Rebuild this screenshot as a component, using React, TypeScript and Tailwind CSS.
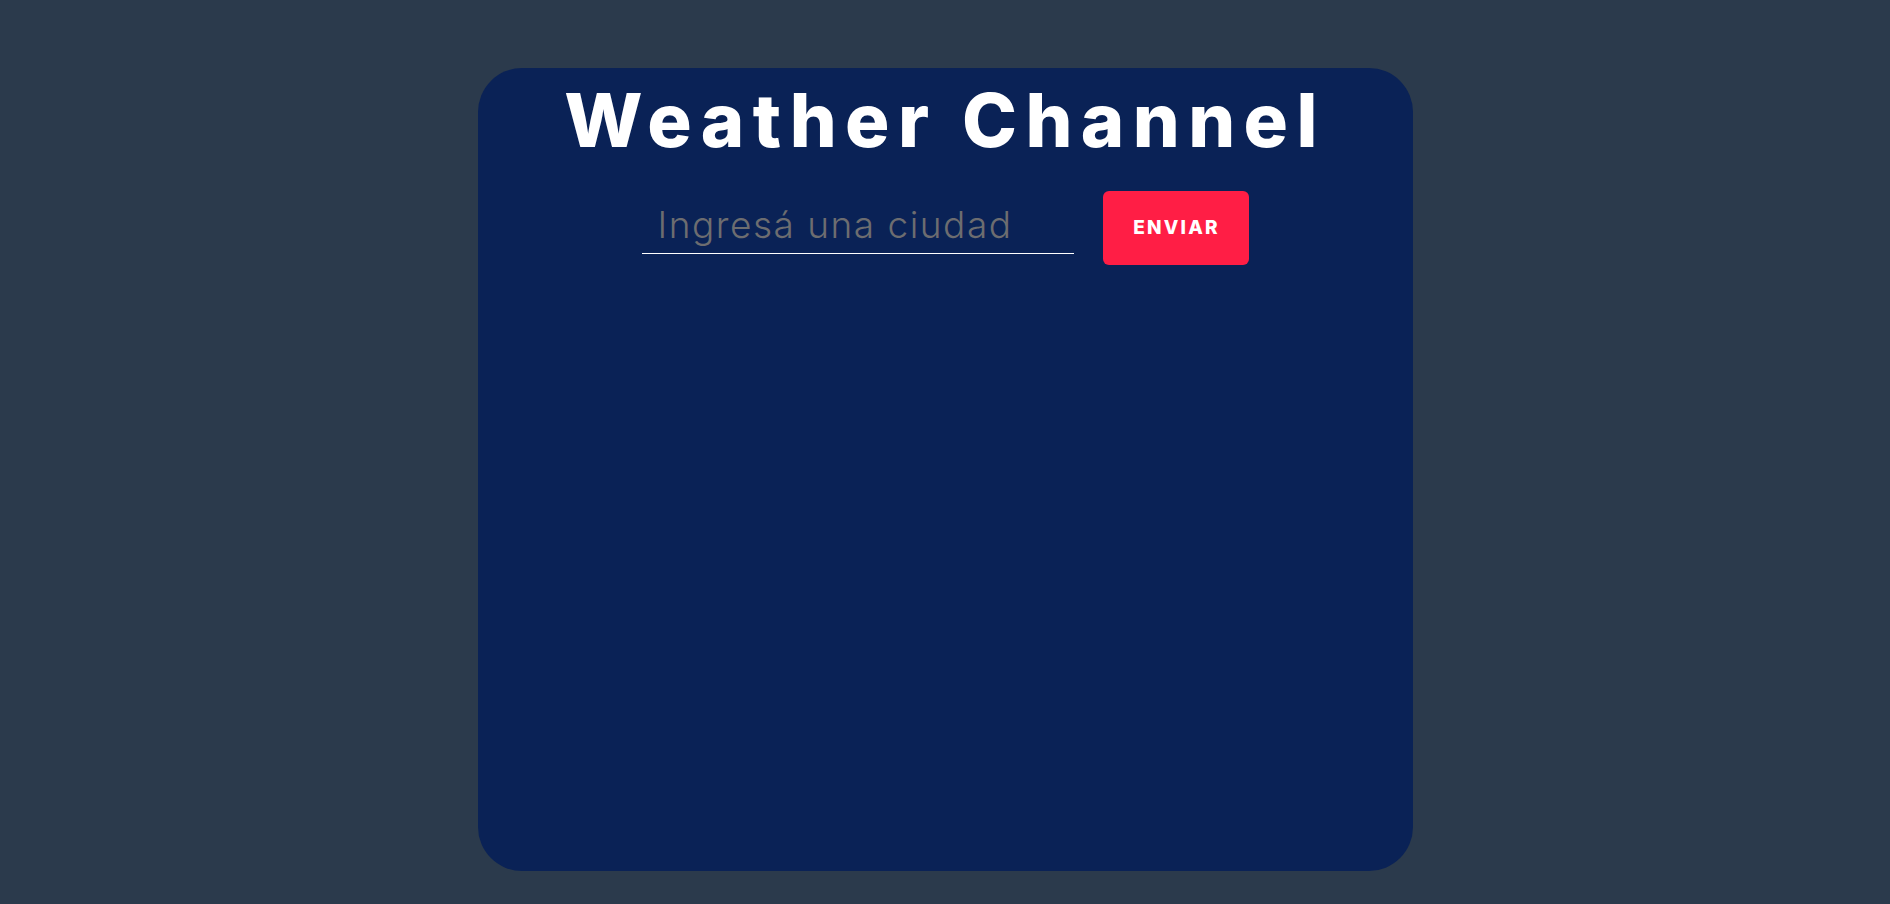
import React from "react";

export default function App() {
  return (
    <div className="w-full h-[904px] bg-[#2b3a4c] pt-[68px] overflow-hidden" style={{ fontFamily: "Inter, 'Noto Sans', sans-serif" }}>
      <div className="mx-auto w-[935px] h-[803px] bg-[#0a2256] rounded-[44px] pt-[15px] flex flex-col items-center">
        <h1 className="text-[74px] leading-none font-extrabold text-white tracking-[8.4px]">Weather Channel</h1>
        <form className="mt-[34px] flex items-start gap-[29px]" onSubmit={(e) => e.preventDefault()}>
          <input
            type="text"
            placeholder="Ingresá una ciudad"
            className="w-[432px] h-[63px] bg-transparent border-0 border-b border-solid border-white pl-[16px] pt-[5px] text-[37px] tracking-[1.5px] font-light text-white placeholder:text-[#6d6d70] outline-none"
          />
          <button
            type="submit"
            className="w-[146px] h-[74px] bg-[#ff1e45] rounded-[6px] text-white font-extrabold text-[19px] tracking-[2.2px] pl-[2px] uppercase"
          >
            Enviar
          </button>
        </form>
      </div>
    </div>
  );
}
